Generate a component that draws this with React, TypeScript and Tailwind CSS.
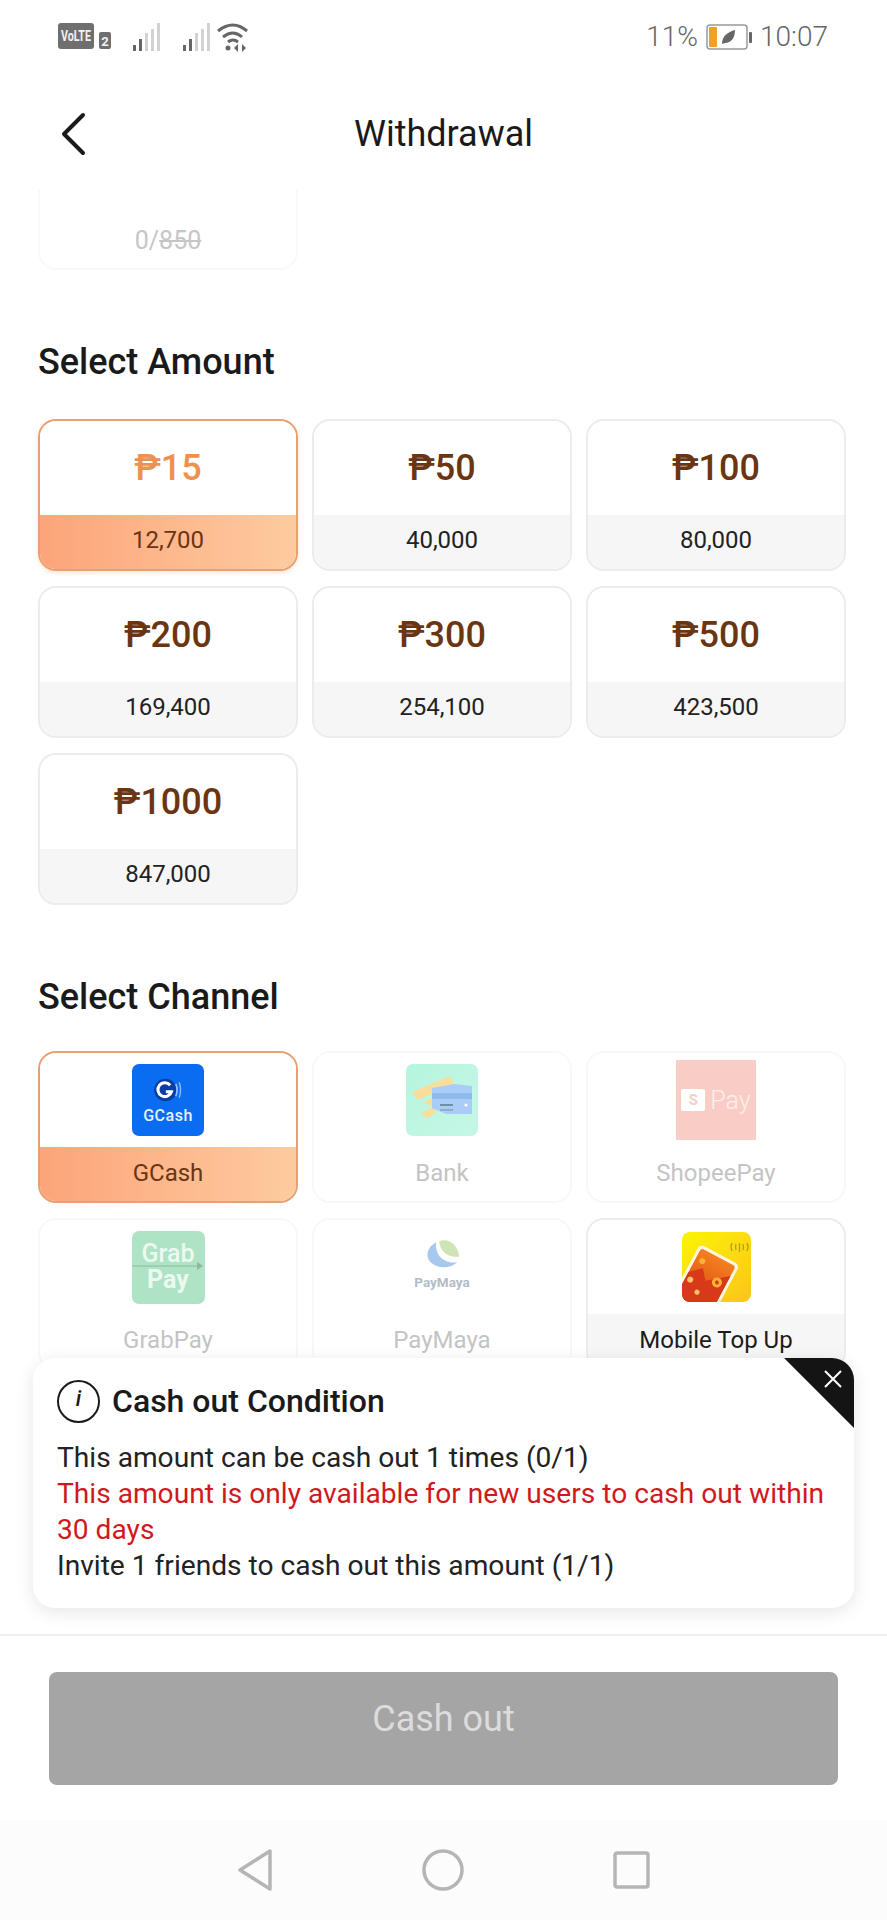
import React from "react";

const font = { fontFamily: "Roboto, 'Liberation Sans', sans-serif" };

function StatusBar() {
  return (
    <div className="h-[70px] flex items-center justify-between pl-[58px] pr-[59px] pt-[4px] text-[#666666]">
      <div className="flex items-center">
        <svg width="205" height="32" viewBox="0 0 205 32">
          <rect x="0" y="2" width="36" height="26" rx="3" fill="#6f6f6f" />
          <text x="18" y="20" textAnchor="middle" fontSize="14" fontWeight="700" fill="#f2f2f2" fontFamily="Roboto" textLength="30" lengthAdjust="spacingAndGlyphs">VoLTE</text>
          <rect x="41" y="11" width="12" height="17" rx="2" fill="#6f6f6f" />
          <text x="47" y="25" textAnchor="middle" fontSize="13" fontWeight="700" fill="#f2f2f2" fontFamily="Roboto">2</text>
          {[0, 50].map((o) => (
            <g key={o}>
              <rect x={75 + o} y="24" width="3" height="6" fill="#666" />
              <rect x={81 + o} y="18" width="3" height="12" fill="#666" />
              <rect x={87 + o} y="12" width="3" height="18" fill="#d2d2d2" />
              <rect x={93 + o} y="8" width="3" height="22" fill="#d2d2d2" />
              <rect x={99 + o} y="2" width="3" height="28" fill="#d2d2d2" />
            </g>
          ))}
          <path d="M160 10 Q175 -2 189 10" stroke="#666" strokeWidth="3" fill="none" />
          <path d="M165 16 Q175 8 184 16" stroke="#666" strokeWidth="3" fill="none" />
          <path d="M170 21 Q175 17 180 21" stroke="#666" strokeWidth="3" fill="none" />
          <circle cx="170" cy="27" r="2.5" fill="#666" />
          <path d="M180 23v8l-4-4zM184 23v8l4-4z" fill="#666" />
        </svg>
      </div>
      <div className="flex items-center text-[28px] leading-none font-light">
        <span>11%</span>
        <svg width="46" height="26" viewBox="0 0 46 26" className="ml-[8px]">
          <rect x="1" y="1" width="40" height="24" rx="3" fill="#fff" stroke="#999" strokeWidth="1.5" />
          <rect x="3" y="3" width="8" height="20" rx="1" fill="#f2a024" />
          <path d="M16 20 C16 12 22 8 29 6 C29 14 25 19 19 19 Z" fill="#666" />
          <rect x="43" y="8" width="3" height="11" rx="1" fill="#666" />
        </svg>
        <span className="ml-[8px]">10:07</span>
      </div>
    </div>
  );
}

function Header() {
  return (
    <div className="h-[120px] relative flex items-center justify-center pt-[8px] bg-white z-10">
      <svg width="28" height="44" viewBox="0 0 28 44" className="absolute left-[59px] top-[42px]">
        <path d="M24 3 L5 22 L24 41" fill="none" stroke="#1a1a1a" strokeWidth="4" strokeLinecap="round" strokeLinejoin="round" />
      </svg>
      <span className="text-[36px] leading-none text-[#1a1a1a]">Withdrawal</span>
    </div>
  );
}

function AmountCard({ amount, coins, active }: { amount: string; coins: string; active?: boolean }) {
  return (
    <div
      className={
        "h-[152px] rounded-[18px] overflow-hidden flex flex-col border-2 " +
        (active ? "border-[#e8a070] shadow-[0_2px_4px_rgba(240,150,90,0.25)]" : "border-[#ececec]")
      }
    >
      <div className={"flex-1 flex items-center justify-center text-[36px] font-medium leading-none bg-white " + (active ? "text-[#ee9150]" : "text-[#6b3512]")}>
        {amount}
      </div>
      <div
        className={
          "h-[54px] flex items-center justify-center pb-[4px] text-[24px] leading-none " +
          (active ? "bg-gradient-to-r from-[#fca47a] to-[#fdcb9f] text-[#6b3512]" : "bg-[#f6f6f6] text-[#222222]")
        }
      >
        {coins}
      </div>
    </div>
  );
}

function GCashLogo() {
  return (
    <div className="w-[72px] h-[72px] rounded-[7px] bg-[#0a6cf0] flex flex-col items-center justify-center">
      <svg width="32" height="26" viewBox="0 0 34 30">
        <circle cx="14" cy="15" r="13" fill="#0a3da8" />
        <path d="M19.5 9.5 A8 8 0 1 0 21 17 L14.5 17" fill="none" stroke="#fff" strokeWidth="3.5" />
        <path d="M26 8 Q29 15 26 22" fill="none" stroke="#8fc0ff" strokeWidth="2" />
        <path d="M30 6 Q33 15 30 24" fill="none" stroke="#8fc0ff" strokeWidth="1.5" />
      </svg>
      <span className="text-[#e4f0ff] text-[16px] font-medium tracking-[0.5px] leading-none mt-[5px]">GCash</span>
    </div>
  );
}

function BankLogo() {
  return (
    <div className="w-[72px] h-[72px] rounded-[7px] bg-gradient-to-br from-[#b5f5de] to-[#c6f7e6] overflow-hidden">
      <svg width="72" height="72" viewBox="0 0 72 72">
        <path d="M6 28 L44 12 L48 20 L12 36 Z" fill="#f9dd9a" />
        <path d="M18 38 L30 32 L30 38 L24 42 Z" fill="#f9dd9a" />
        <path d="M14 50 L28 42 L30 48 L22 54 Z" fill="#f9dd9a" />
        <path d="M26 24 L48 20 L66 22 L66 50 L40 50 L26 44 Z" fill="#a9cdf6" />
        <rect x="26" y="29" width="40" height="6" fill="#8fbcec" />
        <rect x="34" y="40" width="13" height="2" fill="#6d8fa8" />
        <rect x="34" y="45" width="13" height="2" fill="#8fb0c4" />
        <circle cx="60" cy="41" r="1.5" fill="#fff" />
      </svg>
    </div>
  );
}

function ShopeeLogo() {
  return (
    <div className="w-[80px] h-[80px] bg-[#f9cdc5] flex items-center justify-center gap-[5px]">
      <div className="w-[24px] h-[22px] bg-white rounded-[2px] flex items-center justify-center text-[#f9cdc5] text-[15px] font-bold leading-none">S</div>
      <span className="text-[#fdeeea] text-[25px] font-light leading-none">Pay</span>
    </div>
  );
}

function GrabLogo() {
  return (
    <div className="w-[73px] h-[73px] rounded-[7px] bg-[#aee3c5] relative flex flex-col items-center justify-center text-[#ecf9f1] font-medium text-[25px] leading-[26px]">
      <span>Grab</span>
      <span className="font-bold">Pay</span>
      <svg width="73" height="10" viewBox="0 0 73 10" className="absolute left-0 top-[30px]">
        <path d="M0 5H66" stroke="#8fb8a0" strokeWidth="1" />
        <path d="M65 1l6 4-6 4z" fill="#8fb8a0" />
      </svg>
    </div>
  );
}

function MayaLogo() {
  return (
    <div className="w-[72px] h-[72px] flex flex-col items-center justify-start pt-[8px]">
      <svg width="38" height="33" viewBox="0 0 40 34">
        <path d="M17 2 C27 -2 37 6 38 18 C28 20 18 14 17 2Z" fill="#cfe3b5" />
        <path d="M14 3 C4 8 2 18 8 24 C16 32 30 30 36 24 C24 26 12 18 14 3Z" fill="#a9c8ee" />
      </svg>
      <span className="text-[#b2bcc8] text-[13.5px] font-bold leading-none mt-[4px]">PayMaya</span>
    </div>
  );
}

function TopUpLogo() {
  return (
    <div className="w-[69px] h-[70px] rounded-[8px] bg-gradient-to-br from-[#fbf400] to-[#fbc419] relative overflow-hidden">
      <svg width="69" height="70" viewBox="0 0 69 70" className="absolute left-0 top-0">
        <defs>
          <linearGradient id="topup" x1="0" y1="0" x2="0" y2="1">
            <stop offset="0" stopColor="#f5801f" />
            <stop offset="1" stopColor="#d03a14" />
          </linearGradient>
        </defs>
        <g transform="translate(18 12) rotate(28)">
          <rect x="0" y="0" width="45" height="68" rx="5" fill="#fff6e0" />
          <rect x="3" y="3" width="39" height="62" rx="3" fill="url(#topup)" />
          <path d="M3 30 L14 20 L22 30 L42 14 L42 65 L3 65Z" fill="#d8391a" />
          <circle cx="33" cy="26" r="5" fill="#f9b233" />
          <circle cx="33" cy="26" r="2" fill="#d8391a" />
          <circle cx="10" cy="14" r="3" fill="#f9b233" />
          <circle cx="8" cy="36" r="3" fill="#fbc26a" />
          <circle cx="20" cy="44" r="2.5" fill="#fbc26a" />
        </g>
        <path d="M50 11q-2 4 0 8M65 11q2 4 0 8M54 12q-1 3 0 6M61 12q1 3 0 6M57.500 11v9" stroke="#b59a20" strokeWidth="1.2" fill="none" />
      </svg>
    </div>
  );
}

function ChannelCard({ name, logo, active, disabled }: { name: string; logo: React.ReactNode; active?: boolean; disabled?: boolean }) {
  return (
    <div
      className={
        "h-[152px] rounded-[18px] overflow-hidden flex flex-col border-2 " +
        (active ? "border-[#e8a070]" : disabled ? "border-[#f8f8f8]" : "border-[#ececec]")
      }
    >
      <div className="h-[94px] flex items-center justify-center bg-white">{logo}</div>
      <div
        className={
          "flex-1 flex items-center justify-center pb-[3px] text-[24px] leading-none " +
          (active
            ? "bg-gradient-to-r from-[#fca47a] to-[#fdcb9f] text-[#6b3512]"
            : disabled
              ? "bg-white text-[#c4c4c4]"
              : "bg-[#f6f6f6] text-[#1c1c1c]")
        }
      >
        {name}
      </div>
    </div>
  );
}

function Popup() {
  return (
    <div className="absolute left-[33px] top-[1168px] w-[821px] h-[250px] bg-white rounded-[22px] shadow-[0_4px_18px_rgba(0,0,0,0.1)] overflow-hidden pl-[24px] pt-[21px] text-[#222222]">
      <div className="absolute right-0 top-0 w-[70px] h-[70px] bg-[#141414] [clip-path:polygon(0_0,100%_0,100%_100%)]" />
      <svg width="20" height="20" viewBox="0 0 20 20" className="absolute right-[11px] top-[11px]">
        <path d="M2 2 L18 18 M18 2 L2 18" stroke="#fff" strokeWidth="2" />
      </svg>
      <div className="flex items-center h-[44px]">
        <div className="w-[43px] h-[43px] rounded-full border-2 border-[#1a1a1a] flex items-center justify-center pb-[4px] italic font-medium text-[22px] leading-none text-[#1a1a1a]">i</div>
        <span className="ml-[12px] text-[32px] font-medium leading-none text-[#1a1a1a]">Cash out Condition</span>
      </div>
      <div className="mt-[17px] text-[28.15px] leading-[36px] pr-[20px]">
        <div>This amount can be cash out 1 times (0/1)</div>
        <div className="text-[#d0191c]">This amount is only available for new users to cash out within 30 days</div>
        <div>Invite 1 friends to cash out this amount (1/1)</div>
      </div>
    </div>
  );
}

export default function App() {
  const amounts = [
    ["₱15", "12,700"],
    ["₱50", "40,000"],
    ["₱100", "80,000"],
    ["₱200", "169,400"],
    ["₱300", "254,100"],
    ["₱500", "423,500"],
    ["₱1000", "847,000"],
  ];
  return (
    <div className="w-[887px] h-[1920px] bg-white flex flex-col overflow-hidden" style={font}>
      <StatusBar />
      <Header />
      <div className="relative flex-1 min-h-0">
        <div className="h-full overflow-hidden px-[38px]">
          <div className="w-[260px] h-[80px] rounded-b-[18px] border-x-2 border-b-2 border-[#f9f9f9] flex items-end justify-center pb-[9px] text-[25px] leading-[36px] text-[#c6c6c6]">
            <span>0/<span className="line-through">850</span></span>
          </div>
          <h2 className="mt-[70px] text-[36px] leading-[44px] font-medium text-[#1a1a1a]">Select Amount</h2>
          <div className="mt-[35px] grid grid-cols-3 gap-x-[14px] gap-y-[15px] w-[808px]">
            {amounts.map(([a, c], i) => (
              <AmountCard key={a} amount={a} coins={c} active={i === 0} />
            ))}
          </div>
          <h2 className="mt-[70px] text-[36px] leading-[44px] font-medium text-[#1a1a1a]">Select Channel</h2>
          <div className="mt-[32px] grid grid-cols-3 gap-x-[14px] gap-y-[15px] w-[808px]">
            <ChannelCard name="GCash" logo={<GCashLogo />} active />
            <ChannelCard name="Bank" logo={<BankLogo />} disabled />
            <ChannelCard name="ShopeePay" logo={<ShopeeLogo />} disabled />
            <ChannelCard name="GrabPay" logo={<GrabLogo />} disabled />
            <ChannelCard name="PayMaya" logo={<MayaLogo />} disabled />
            <ChannelCard name="Mobile Top Up" logo={<TopUpLogo />} />
          </div>
        </div>
        <Popup />
      </div>
      <div className="h-[186px] border-t-2 border-[#f0f0f0] px-[49px] pt-[36px] bg-white">
        <div className="h-[113px] rounded-[8px] bg-[#a5a5a5] flex items-center justify-center text-[36px] leading-none text-[#dcdcdc] pb-[20px]">Cash out</div>
      </div>
      <div className="h-[100px] bg-[#fcfcfc] flex items-center justify-center gap-[149px]">
        <svg width="36" height="42" viewBox="0 0 36 42">
          <path d="M33 2 L3 21 L33 40 Z" fill="none" stroke="#b5b5b5" strokeWidth="3.5" strokeLinejoin="round" />
        </svg>
        <svg width="42" height="42" viewBox="0 0 42 42">
          <circle cx="21" cy="21" r="19" fill="none" stroke="#b5b5b5" strokeWidth="3.5" />
        </svg>
        <svg width="37" height="38" viewBox="0 0 37 38">
          <rect x="2" y="2" width="33" height="34" rx="2" fill="none" stroke="#b5b5b5" strokeWidth="3.5" />
        </svg>
      </div>
    </div>
  );
}
